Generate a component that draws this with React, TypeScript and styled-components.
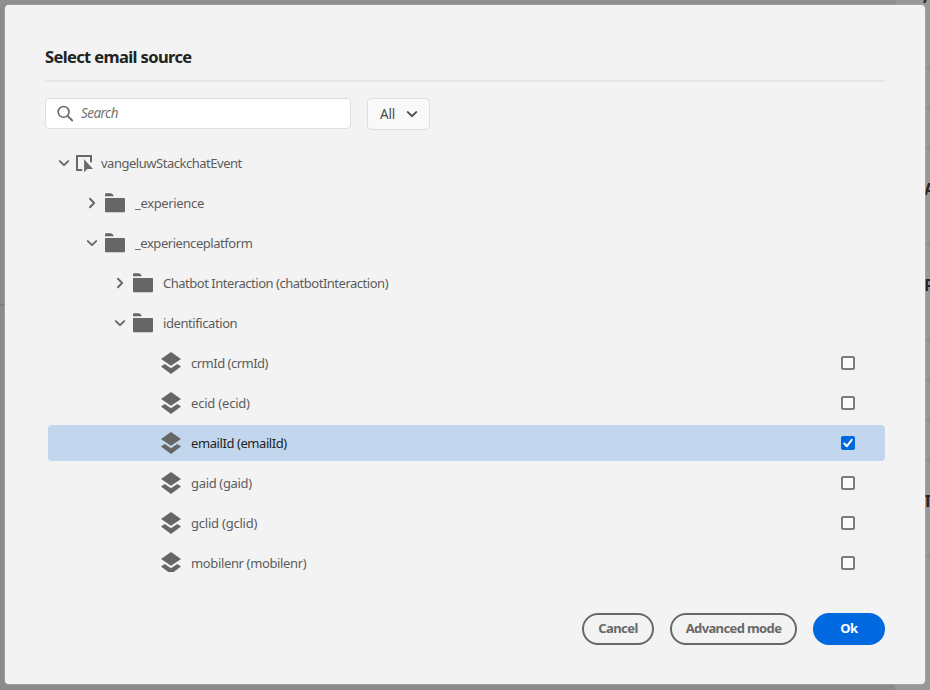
import React, { useState } from 'react';
import styled, { createGlobalStyle, css } from 'styled-components';

const GlobalStyle = createGlobalStyle`
  * { box-sizing: border-box; }
  html, body, #root { height: 100%; }
  body {
    margin: 0;
    overflow: hidden;
    background: #8c8c8c;
    font-family: "Noto Sans", "Open Sans", sans-serif;
  }
`;

const Screen = styled.div`
  position: relative;
  display: grid;
  grid-template-columns: 895px 35px;
  height: 690px;
  overflow: hidden;
`;

const Workspace = styled.div`
  background: linear-gradient(#919191, #8b8b8b 12px);
  padding-top: 304px;
`;

const WorkspaceRule = styled.div`
  height: 2px;
  background: #7b7b7b;
`;

const Rail = styled.div`
  display: flex;
  flex-direction: column;
  background: #989898;
  box-shadow: -1px 0 0 #898989;
`;

const RailCell = styled.div<{ $height: number; $last?: boolean }>`
  flex: none;
  height: ${(p) => p.$height}px;
  padding-left: 29px;
  border-bottom: ${(p) => (p.$last ? 'none' : '1px solid #858585')};
  color: #252525;
  font-size: 16.5px;
  font-weight: 700;
  line-height: 24px;
  white-space: nowrap;
  overflow: hidden;
`;

const RailTitle = styled.div<{ $top: number; $shift?: number }>`
  margin-top: ${(p) => p.$top}px;
  margin-left: ${(p) => p.$shift ?? 0}px;
`;

const Dialog = styled.section`
  position: absolute;
  inset: 5px 5px 6px;
  display: flex;
  flex-direction: column;
  padding: 40px 40px 0;
  border-radius: 4px;
  background: #f3f3f3;
  box-shadow: 0 0 0 0.5px #b0b0b0;
`;

const Title = styled.h1`
  margin: 0;
  height: 35px;
  color: #222;
  font-size: 16.5px;
  font-weight: 700;
  line-height: 23px;
  letter-spacing: -0.62px;
`;

const Divider = styled.div`
  flex: none;
  height: 2px;
  background: #e7e7e7;
`;

const Filters = styled.div`
  display: flex;
  gap: 16px;
  padding-top: 15.5px;
  height: 63px;
`;

const SearchField = styled.label`
  display: flex;
  align-items: center;
  gap: 7px;
  width: 306px;
  height: 31px;
  padding-left: 11px;
  border: 1px solid #dedede;
  border-radius: 4px;
  background: #fff;
`;

const SearchInput = styled.input`
  flex: 1;
  min-width: 0;
  padding: 0 0 1px;
  border: 0;
  outline: 0;
  background: transparent;
  color: #4b4b4b;
  font: italic 13.5px/18px "Noto Sans", sans-serif;
  letter-spacing: -0.55px;
  &::placeholder { color: #747474; opacity: 1; }
`;

const Picker = styled.button`
  display: flex;
  align-items: center;
  justify-content: space-between;
  width: 63px;
  height: 32px;
  padding: 0 11px 0 12px;
  border: 1px solid #dedede;
  border-radius: 4px;
  background: #f9f9f9;
  color: #4b4b4b;
  font: 13.5px/18px "Noto Sans", sans-serif;
  letter-spacing: -0.2px;
`;

const Tree = styled.div`
  display: flex;
  flex-direction: column;
  gap: 4px;
  height: 427px;
  margin-left: 3px;
  overflow: hidden;
`;

const Row = styled.div<{ $level: number; $leaf: boolean; $selected: boolean }>`
  flex: none;
  display: flex;
  align-items: center;
  height: 36px;
  padding-left: ${(p) => 6 + p.$level * 28 + (p.$leaf ? 23 : 0)}px;
  padding-right: 30px;
  border-radius: 4px;
  color: #5c5c5c;
  ${(p) =>
    p.$selected &&
    css`
      background: #c2d6ee;
      color: #222;
    `}
`;

const Toggle = styled.span`
  display: flex;
  justify-content: center;
  width: 20px;
  margin-right: 3px;
  color: #6a6a6a;
`;

const IconSlot = styled.span<{ $root: boolean }>`
  display: flex;
  width: ${(p) => (p.$root ? 17 : 20)}px;
  margin-left: ${(p) => (p.$root ? -1 : 0)}px;
  margin-right: ${(p) => (p.$root ? 8 : 10)}px;
  padding-top: ${(p) => (p.$root ? 1 : 0)}px;
`;

const Label = styled.span<{ $tracking: number }>`
  flex: 1;
  font-size: 13px;
  line-height: 18px;
  letter-spacing: ${(p) => p.$tracking}px;
  white-space: nowrap;
`;

const Checkbox = styled.button<{ $checked: boolean }>`
  display: flex;
  width: 14px;
  height: 14px;
  padding: 0;
  border: ${(p) => (p.$checked ? '0' : '2px solid #7c7c7c')};
  border-radius: 2px;
  background: ${(p) => (p.$checked ? '#0067df' : '#fafafa')};
`;

const Actions = styled.footer`
  display: flex;
  justify-content: flex-end;
  gap: 16px;
  padding-top: 40.5px;
`;

const Action = styled.button<{ $width: number; $primary?: boolean; $tracking: number }>`
  width: ${(p) => p.$width}px;
  height: 32px;
  padding: 0 0 1px;
  border: 2px solid ${(p) => (p.$primary ? '#0069e0' : '#686868')};
  border-radius: 16px;
  background: ${(p) => (p.$primary ? '#0069e0' : 'transparent')};
  color: ${(p) => (p.$primary ? '#fff' : '#686868')};
  font: 700 13px/18px "Noto Sans", sans-serif;
  letter-spacing: ${(p) => p.$tracking}px;
  white-space: nowrap;
`;

const ChevronDown = () => (
  <svg width="12" height="8" viewBox="0 0 12 8" fill="none">
    <path d="M1.8 2.1 6 6.1l4.2-4" stroke="currentColor" strokeWidth="2" strokeLinecap="round" strokeLinejoin="round" />
  </svg>
);

const ChevronRight = () => (
  <svg width="8" height="12" viewBox="0 0 8 12" fill="none">
    <path d="M2 1.8 6.1 6 2 10.2" stroke="currentColor" strokeWidth="2" strokeLinecap="round" strokeLinejoin="round" />
  </svg>
);

const SearchIcon = () => (
  <svg width="17" height="17" viewBox="0 0 17 17" fill="none" stroke="#686868">
    <circle cx="6.6" cy="6.9" r="5.4" strokeWidth="1.6" />
    <path d="m10.6 10.9 4.6 4.6" strokeWidth="1.8" strokeLinecap="round" />
  </svg>
);

const EventIcon = () => (
  <svg width="17" height="18" viewBox="0 0 17 18">
    <path d="M6.2 15.1H1V1.1h14v6.2" fill="none" stroke="#686868" strokeWidth="2" />
    <path d="M8.1 4.2v13.1l3.1-3.3H17z" fill="#686868" />
  </svg>
);

const FolderIcon = () => (
  <svg width="20" height="20" viewBox="0 0 20 20" fill="#666">
    <path d="M0 3.3V1.4C0 .7.6.2 1.2.2h4.5c.6 0 1 .2 1.4.6L9 3.3zM0 5h19.2c.5 0 .8.3.8.8v12.6c0 .5-.3.8-.8.8H.8c-.5 0-.8-.3-.8-.8z" />
  </svg>
);

const LayersIcon = () => (
  <svg width="20" height="22" viewBox="0 0 20 22" fill="#666">
    <path d="M10 0 20 6.9 10 13.8 0 6.9z" />
    <path d="m3.7 11.9 6.3 4.3 6.3-4.3 3.7 2.6L10 22 0 14.5z" />
  </svg>
);

const CheckIcon = () => (
  <svg width="14" height="14" viewBox="0 0 14 14" fill="none">
    <path d="m3.3 7.5 2.6 2.7 4.9-6.4" stroke="#fff" strokeWidth="2" strokeLinecap="round" strokeLinejoin="round" />
  </svg>
);

type Kind = 'event' | 'folder' | 'field';

interface Node {
  label: string;
  kind: Kind;
  level: number;
  open?: boolean;
  tracking: number;
}

const nodes: Node[] = [
  { label: 'vangeluwStackchatEvent', kind: 'event', level: 0, open: true, tracking: -0.48 },
  { label: '_experience', kind: 'folder', level: 1, open: false, tracking: -0.35 },
  { label: '_experienceplatform', kind: 'folder', level: 1, open: true, tracking: -0.45 },
  { label: 'Chatbot Interaction (chatbotInteraction)', kind: 'folder', level: 2, open: false, tracking: -0.48 },
  { label: 'identification', kind: 'folder', level: 2, open: true, tracking: -0.42 },
  { label: 'crmId (crmId)', kind: 'field', level: 3, tracking: -0.5 },
  { label: 'ecid (ecid)', kind: 'field', level: 3, tracking: -0.2 },
  { label: 'emailId (emailId)', kind: 'field', level: 3, tracking: -0.42 },
  { label: 'gaid (gaid)', kind: 'field', level: 3, tracking: -0.33 },
  { label: 'gclid (gclid)', kind: 'field', level: 3, tracking: -0.22 },
  { label: 'mobilenr (mobilenr)', kind: 'field', level: 3, tracking: -0.36 },
];

const icons: Record<Kind, () => React.JSX.Element> = {
  event: EventIcon,
  folder: FolderIcon,
  field: LayersIcon,
};

export default function App() {
  const [selected, setSelected] = useState('emailId (emailId)');

  return (
    <>
      <GlobalStyle />
      <Screen>
        <Workspace>
          <WorkspaceRule />
        </Workspace>
        <Rail>
          <RailCell $height={69}><RailTitle $top={-15} $shift={-1}>/</RailTitle></RailCell>
          <RailCell $height={40} />
          <RailCell $height={40} />
          <RailCell $height={96}><RailTitle $top={28}>A</RailTitle></RailCell>
          <RailCell $height={96}><RailTitle $top={28}>P</RailTitle></RailCell>
          <RailCell $height={40} />
          <RailCell $height={40} />
          <RailCell $height={40} />
          <RailCell $height={96}><RailTitle $top={28} $shift={-1}>T</RailTitle></RailCell>
          <RailCell $height={133} $last />
        </Rail>
        <Dialog>
          <Title>Select email source</Title>
          <Divider />
          <Filters>
            <SearchField>
              <SearchIcon />
              <SearchInput placeholder="Search" />
            </SearchField>
            <Picker>
              All
              <ChevronDown />
            </Picker>
          </Filters>
          <Tree>
            {nodes.map((node) => {
              const Icon = icons[node.kind];
              const leaf = node.kind === 'field';
              const checked = node.label === selected;
              return (
                <Row key={node.label} $level={node.level} $leaf={leaf} $selected={checked}>
                  {!leaf && <Toggle>{node.open ? <ChevronDown /> : <ChevronRight />}</Toggle>}
                  <IconSlot $root={node.kind === 'event'}>
                    <Icon />
                  </IconSlot>
                  <Label $tracking={node.tracking}>{node.label}</Label>
                  {leaf && (
                    <Checkbox $checked={checked} aria-label={node.label} onClick={() => setSelected(node.label)}>
                      {checked && <CheckIcon />}
                    </Checkbox>
                  )}
                </Row>
              );
            })}
          </Tree>
          <Actions>
            <Action $width={72} $tracking={-0.55}>Cancel</Action>
            <Action $width={127} $tracking={-0.62}>Advanced mode</Action>
            <Action $width={72} $tracking={-0.5} $primary>Ok</Action>
          </Actions>
        </Dialog>
      </Screen>
    </>
  );
}
